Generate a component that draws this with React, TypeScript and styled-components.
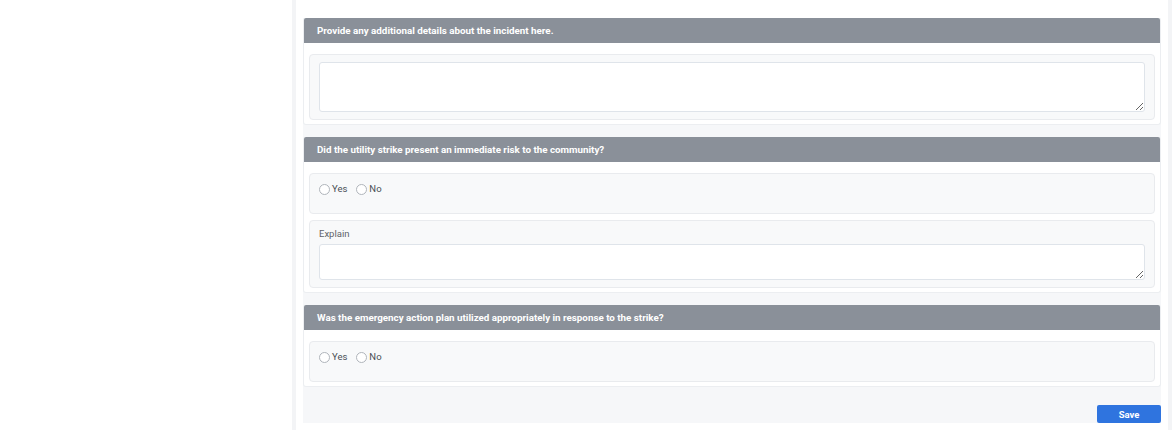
import React from "react";
import styled, { createGlobalStyle } from "styled-components";

const Global = createGlobalStyle`
  html, body { margin: 0; padding: 0; background: #ffffff; }
  body { font-family: Roboto, "Liberation Sans", Arial, sans-serif; }
  * { box-sizing: border-box; }
`;

const Page = styled.div`
  display: flex;
  height: 430px;
  width: 1172px;
  overflow: hidden;
`;

const Sidebar = styled.div`
  width: 292px;
  flex: none;
  background: #ffffff;
`;

const Main = styled.main`
  flex: 1;
  border-left: 4px solid #f3f4f6;
  border-right: 4px solid #f3f4f6;
  padding: 18px 7px 0 7px;
  background: #ffffff;
`;

const Form = styled.form`
  background: #f6f7f9;
  display: flex;
  flex-direction: column;
  gap: 12px;
  margin: 0;
`;

const Section = styled.section`
  background: #ffffff;
  border: 1px solid #eceef1;
  border-top: none;
  border-radius: 3px;
`;

const Header = styled.div`
  background: #8a9099;
  height: 25px;
  display: flex;
  align-items: center;
  padding-left: 13px;
  color: #ffffff;
  font-size: 9.8px;
  font-weight: 700;
  border-radius: 2px 2px 0 0;
`;

const Body = styled.div`
  padding: 11px 5px 4px 5px;
  display: flex;
  flex-direction: column;
  gap: 6px;
`;

const Well = styled.div<{ $minH?: number }>`
  background: #f8f9fa;
  border: 1px solid #e9ebee;
  border-radius: 4px;
  padding: 7px 9px;
  min-height: ${(p) => (p.$minH ? `${p.$minH}px` : "auto")};
`;

const TextArea = styled.textarea<{ $h: number }>`
  display: block;
  width: 100%;
  height: ${(p) => p.$h}px;
  border: 1px solid #dfe4ea;
  border-radius: 3px;
  background: #ffffff;
  resize: vertical;
  font-family: inherit;
  font-size: 11px;
  outline: none;
  margin: 0;
`;

const Label = styled.label`
  display: block;
  font-size: 9.5px;
  line-height: 12px;
  color: #5f6368;
  margin: 0 0 4px 0;
`;

const RadioRow = styled.div`
  display: flex;
  align-items: center;
  gap: 9px;
  padding-top: 2px;
`;

const RadioLabel = styled.label`
  display: flex;
  align-items: center;
  gap: 2px;
  font-size: 9.5px;
  line-height: 12px;
  color: #4a4f55;
`;

const Radio = styled.input`
  appearance: none;
  -webkit-appearance: none;
  width: 11px;
  height: 11px;
  margin: 0;
  border: 1px solid #b0b5bb;
  border-radius: 50%;
  background: #ffffff;
`;

const Footer = styled.div`
  display: flex;
  justify-content: flex-end;
  padding-top: 6px;
`;

const SaveButton = styled.button`
  width: 64px;
  height: 18px;
  background: #2f74df;
  color: #ffffff;
  border: none;
  border-radius: 2px;
  font-family: inherit;
  font-size: 9.5px;
  font-weight: 700;
  cursor: pointer;
  padding: 0;
`;

const YesNo: React.FC<{ name: string }> = ({ name }) => (
  <RadioRow>
    <RadioLabel>
      <Radio type="radio" name={name} />
      Yes
    </RadioLabel>
    <RadioLabel>
      <Radio type="radio" name={name} />
      No
    </RadioLabel>
  </RadioRow>
);

export default function App() {
  return (
    <>
      <Global />
      <Page>
        <Sidebar />
        <Main>
          <Form onSubmit={(e) => e.preventDefault()}>
            <Section>
              <Header>Provide any additional details about the incident here.</Header>
              <Body>
                <Well>
                  <TextArea $h={50} />
                </Well>
              </Body>
            </Section>
            <Section>
              <Header>Did the utility strike present an immediate risk to the community?</Header>
              <Body>
                <Well $minH={41}>
                  <YesNo name="risk" />
                </Well>
                <Well>
                  <Label>Explain</Label>
                  <TextArea $h={36} />
                </Well>
              </Body>
            </Section>
            <Section>
              <Header>Was the emergency action plan utilized appropriately in response to the strike?</Header>
              <Body>
                <Well $minH={41}>
                  <YesNo name="plan" />
                </Well>
              </Body>
            </Section>
            <Footer>
              <SaveButton type="submit">Save</SaveButton>
            </Footer>
          </Form>
        </Main>
      </Page>
    </>
  );
}
